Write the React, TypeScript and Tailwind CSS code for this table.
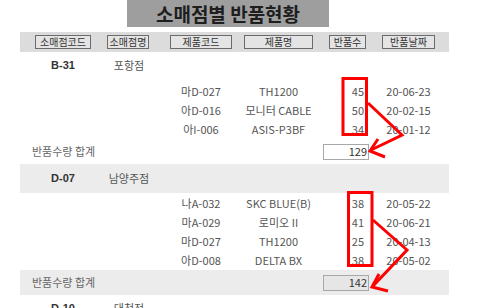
const FONT = "font-['Noto_Sans_CJK_KR','Noto_Sans',sans-serif]";

type Item = { code: string; name: string; qty: number; date: string };

type Store = { code: string; name: string; items: Item[]; total: number };

const stores: Store[] = [
  {
    code: 'B-31',
    name: '포항점',
    items: [
      { code: '마D-027', name: 'TH1200', qty: 45, date: '20-06-23' },
      { code: '아D-016', name: '모니터 CABLE', qty: 50, date: '20-02-15' },
      { code: '아I-006', name: 'ASIS-P3BF', qty: 34, date: '20-01-12' },
    ],
    total: 129,
  },
  {
    code: 'D-07',
    name: '남양주점',
    items: [
      { code: '나A-032', name: 'SKC BLUE(B)', qty: 38, date: '20-05-22' },
      { code: '마A-029', name: '로미오 II', qty: 41, date: '20-06-21' },
      { code: '마D-027', name: 'TH1200', qty: 25, date: '20-04-13' },
      { code: '아D-008', name: 'DELTA BX', qty: 38, date: '20-05-02' },
    ],
    total: 142,
  },
];

function HeaderButton({ label, className }: { label: string; className: string }) {
  return (
    <div
      className={`${className} h-[14px] flex items-center justify-center border border-[#6b6b6b] bg-[#e4e4e4] text-[10px] leading-none text-[#333] whitespace-nowrap`}
    >
      {label}
    </div>
  );
}

function StoreRow({ store, shaded }: { store: Store; shaded: boolean }) {
  return (
    <div className={`flex items-center w-[429px] ml-[20px] ${shaded ? 'h-[29px] bg-[#ececec]' : 'h-[26px]'}`}>
      <div className="w-[86px] flex justify-center font-['Liberation_Sans',sans-serif] font-bold text-[11px] text-[#333]">
        {store.code}
      </div>
      <div className="w-[44px] ml-[1px] flex justify-center whitespace-nowrap text-[11px] text-[#555]">
        {store.name}
      </div>
    </div>
  );
}

function ItemRow({ item }: { item: Item }) {
  return (
    <div className="flex items-center h-[19px] ml-[20px] text-[11px] text-[#555] whitespace-nowrap">
      <div className="w-[86px]" />
      <div className="w-[44px] ml-[1px]" />
      <div className="w-[62px] ml-[19px] flex justify-center">{item.code}</div>
      <div className="w-[69px] ml-[12px] flex justify-center">{item.name}</div>
      <div className="w-[37px] ml-[16px] flex justify-end pr-[2px]">{item.qty}</div>
      <div className="w-[53px] ml-[16px] flex justify-center">{item.date}</div>
    </div>
  );
}

function TotalRow({ total, shaded }: { total: number; shaded: boolean }) {
  return (
    <div className={`flex items-center h-[25px] w-[429px] ml-[20px] ${shaded ? 'bg-[#ececec]' : ''}`}>
      <div className="w-[303px] pl-[12px] text-[11px] text-[#666]">반품수량 합계</div>
      <div
        className={`w-[46px] h-[16px] flex items-center justify-end pr-[1px] border border-[#a8a8a8] text-[11px] text-[#333] ${shaded ? 'bg-[#e6e6e6]' : 'bg-white'}`}
      >
        {total}
      </div>
    </div>
  );
}

export default function App() {
  return (
    <div className={`relative w-[484px] h-[308px] overflow-hidden bg-white ${FONT}`}>
      <div className="ml-[127px] w-[202px] h-[27px] bg-[#9e9e9e] flex items-center justify-center text-[19px] font-bold text-[#1e1e1e] leading-none">
        소매점별 반품현황
      </div>

      <div className="mt-[5px] ml-[20px] w-[429px] h-[20px] bg-[#dcdcdc] flex items-center">
        <HeaderButton label="소매점코드" className="ml-[15px] w-[56px]" />
        <HeaderButton label="소매점명" className="ml-[16px] w-[42px]" />
        <HeaderButton label="제품코드" className="ml-[21px] w-[62px]" />
        <HeaderButton label="제품명" className="ml-[12px] w-[69px]" />
        <HeaderButton label="반품수" className="ml-[16px] w-[37px]" />
        <HeaderButton label="반품날짜" className="ml-[16px] w-[53px]" />
      </div>

      <StoreRow store={stores[0]} shaded={false} />
      <div className="pt-[4px]">
        {stores[0].items.map((item) => (
          <ItemRow key={item.code + item.name} item={item} />
        ))}
      </div>
      <TotalRow total={stores[0].total} shaded={false} />

      <StoreRow store={stores[1]} shaded />
      <div className="pt-[1px]">
        {stores[1].items.map((item) => (
          <ItemRow key={item.code + item.name} item={item} />
        ))}
      </div>
      <TotalRow total={stores[1].total} shaded />

      <StoreRow store={{ code: 'D-10', name: '대천점', items: [], total: 0 }} shaded={false} />

      {/* red annotation marks */}
      <svg className="absolute left-0 top-0 pointer-events-none" width="484" height="308">
        <g fill="none" stroke="#f00" strokeWidth="3" strokeLinejoin="miter">
          <rect x="343" y="78.5" width="23.5" height="56" />
          <polyline points="368,103 402,135 371,150" />
          <polyline points="378,139 370,151 385,157" />
          <rect x="348.5" y="192.5" width="23.5" height="73" />
          <polyline points="373,220 407,250 373,286" />
          <polyline points="379,274 372,287 388,291" />
        </g>
      </svg>
    </div>
  );
}
